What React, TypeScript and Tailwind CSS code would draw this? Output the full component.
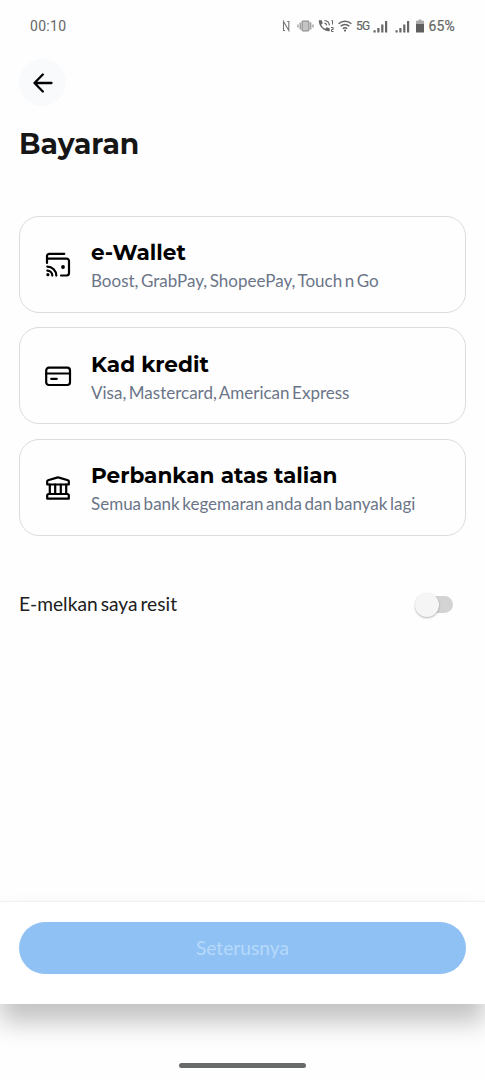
import type { ReactNode } from 'react'

function NfcIcon() {
  return (
    <svg width="9" height="12" viewBox="0 0 9 12" fill="none" stroke="#777" strokeWidth="1.100">
      <path d="M3.200 10.500H1.500V1.500L6.800 10.500V1.500H5.200" />
    </svg>
  )
}

function VibrateIcon() {
  return (
    <svg width="17" height="12" viewBox="0 0 17 12" fill="none" stroke="#888" strokeWidth="1.1">
      <rect x="5" y="1" width="7" height="10" rx="1.2" fill="#c4c4c4" />
      <path d="M3.2 2.500v7M13.800 2.500v7M1 4.500v3M16 4.500v3" />
    </svg>
  )
}

function CallIcon() {
  return (
    <svg width="17" height="14" viewBox="0 0 17 14" fill="none" stroke="#666" strokeWidth="1.200">
      <path d="M.8 1.300h3l.9 3L3.200 5.700c.9 2 2 3.100 4 4l1.500-1.400 3 .9v3C6 12.900.4 7.300.8 1.300Z" fill="#666" stroke="none" />
      <path d="M6.500 4.200c1.200.2 2 1 2.200 2.200M6.500 1.500c2.700.2 4.700 2.200 4.900 4.900" />
      <path d="M13.500 1.500h1v4M13 8.500h2.200v2H13.500v2h2" strokeWidth="1" />
    </svg>
  )
}

function WifiIcon() {
  return (
    <svg width="14" height="12" viewBox="0 0 14 12" fill="none" stroke="#666" strokeWidth="1.500">
      <path d="M.6 3.800c3.600-3.500 9.200-3.500 12.800 0M2.700 6.300c2.400-2.300 6.200-2.300 8.600 0M4.800 8.700c1.300-1.200 3.100-1.200 4.400 0" />
      <circle cx="7" cy="10.600" r="1.100" fill="#666" stroke="none" />
    </svg>
  )
}

function SignalIcon() {
  return (
    <svg width="15" height="13" viewBox="0 0 15 13" fill="#666">
      <path d="M.5 10.200h2.200v2.300H.5zM4.300 8h2.200v4.500H4.300zM8.200 4.500h2.200v8H8.200zM12 1h2.200v11.500H12z" />
    </svg>
  )
}

function BatteryIcon() {
  return (
    <svg width="8" height="14" viewBox="0 0 8 14">
      <path d="M2.500.5h3v1.300H8V5H0V1.800h2.500z" fill="#aaa" />
      <path d="M0 5h8v8.500H0z" fill="#5f5f5f" />
    </svg>
  )
}

function WalletIcon() {
  return (
    <svg width="28" height="28" viewBox="0 0 28 28" fill="none" stroke="#000" strokeWidth="2.200" strokeLinecap="round" strokeLinejoin="round">
      <path d="M20.300 2.800H5.300a2.300 2.300 0 0 0-2.300 2.300V12M3 7.600H22.500a2.500 2.500 0 0 1 2.500 2.500v11.900a2.500 2.500 0 0 1-2.500 2.500h-5.500" />
      <path d="M3.300 15.600c5 0 9 4 9 9M3.300 19.600c2.800 0 5 2.200 5 5" />
      <circle cx="3.900" cy="23.700" r="1.600" fill="#000" stroke="none" />
      <circle cx="19" cy="16" r="1.900" fill="#000" stroke="none" />
    </svg>
  )
}

function CardIcon() {
  return (
    <svg width="28" height="28" viewBox="0 0 28 28" fill="none" stroke="#000" strokeWidth="2.200" strokeLinecap="round">
      <rect x="2.200" y="5.700" width="23.800" height="17.300" rx="2.700" />
      <path d="M2.200 11.500h23.800M7.200 16.800h5.600" />
    </svg>
  )
}

function BankIcon() {
  return (
    <svg width="28" height="28" viewBox="0 0 28 28" fill="none" stroke="#000" strokeWidth="2.200" strokeLinecap="round" strokeLinejoin="round">
      <path d="M3.200 7.300Q3.200 6.400 4 6.200L13 3.600q1-.3 2 0L24 6.200q.8.200.8 1.100v3.200H3.200z" />
      <path d="M5.800 10.500v9M11.200 10.500v9M16.800 10.500v9M22.200 10.500v9" />
      <path d="M4.700 20h18.600q1.500 0 1.500 1.500v3.200H3.200v-3.200q0-1.500 1.500-1.500z" />
    </svg>
  )
}

type Method = { title: string; detail: string; icon: ReactNode }

const methods: Method[] = [
  {
    title: 'e-Wallet',
    detail: 'Boost, GrabPay, ShopeePay, Touch n Go',
    icon: <WalletIcon />,
  },
  {
    title: 'Kad kredit',
    detail: 'Visa, Mastercard, American Express',
    icon: <CardIcon />,
  },
  {
    title: 'Perbankan atas talian',
    detail: 'Semua bank kegemaran anda dan banyak lagi',
    icon: <BankIcon />,
  },
]

function StatusBar() {
  return (
    <div className="flex h-[52px] items-center pl-[30px] font-[Roboto,sans-serif] text-[14px] text-[#666]">
      <span className="tracking-[0.3px]">00:10</span>
      <div className="ml-auto flex items-center pr-[30px]">
        <NfcIcon />
        <span className="ml-[6px]"><VibrateIcon /></span>
        <span className="ml-[4px]"><CallIcon /></span>
        <span className="ml-[3px]"><WifiIcon /></span>
        <span className="ml-[4px] text-[12px] tracking-[-0.8px] [-webkit-text-stroke:0.2px_#666]">5G</span>
        <span className="ml-[4px]"><SignalIcon /></span>
        <span className="ml-[7px]"><SignalIcon /></span>
        <span className="ml-[6px]"><BatteryIcon /></span>
        <span className="ml-[4px] tracking-[0.2px] [-webkit-text-stroke:0.2px_#666]">65%</span>
      </div>
    </div>
  )
}

function MethodCard({ title, detail, icon }: Method) {
  return (
    <button className="flex h-[97px] w-full items-center rounded-[20px] border border-[#dcdcdc] pl-6 text-left">
      <span className="w-[47px] shrink-0 pt-px">{icon}</span>
      <span className="flex flex-col pt-[5px]">
        <span className="font-[Montserrat,sans-serif] text-[21.600px] leading-[29px] font-bold whitespace-nowrap text-black">
          {title}
        </span>
        <span className="text-[17px] leading-[28px] [word-spacing:-1.800px] whitespace-nowrap text-[#6b7588]">{detail}</span>
      </span>
    </button>
  )
}

export default function App() {
  return (
    <div className="flex h-[1080px] w-[485px] flex-col overflow-hidden bg-[#fefefe] font-[Lato,sans-serif]">
      <StatusBar />

      <main className="flex flex-1 flex-col px-[19px] pt-[7px]">
        <button className="flex size-[47px] items-center justify-center rounded-full bg-[#f8fafc]" aria-label="Kembali">
          <svg width="20" height="20" viewBox="0 0 20 20" fill="none" stroke="#000" strokeWidth="2.300" strokeLinecap="round" strokeLinejoin="round">
            <path d="M18.500 10H1.500M9.800 1.500 1.500 10l8.300 8.500" />
          </svg>
        </button>
        <h1 className="mt-5 font-[Montserrat,sans-serif] text-[28.200px] leading-9 font-bold text-[#161616]">
          Bayaran
        </h1>

        <div className="mt-[53.600px] flex flex-col gap-[14.500px]">
          {methods.map((m) => (
            <MethodCard key={m.title} {...m} />
          ))}
        </div>

        <div className="mt-[55px] flex h-7 items-center justify-between pr-[13px]">
          <span className="text-[19.200px] [word-spacing:-1.900px] text-[#202020]">E-melkan saya resit</span>
          <button role="switch" aria-checked="false" aria-label="E-melkan saya resit" className="flex h-[17px] w-[38px] items-center rounded-full bg-linear-to-r from-transparent from-30% to-[#d3d3d3] to-30%">
            <span className="size-6 shrink-0 rounded-full bg-[#f5f5f5] shadow-[0_1px_2px_rgba(0,0,0,0.3)]" />
          </button>
        </div>
      </main>

      <footer className="h-[103px] border-t border-[#f1f1f1] bg-white px-[19px] pt-5 shadow-[0_18px_24px_0_rgba(0,0,0,0.24)]">
        <button className="h-[52px] w-full rounded-full bg-[#8fc1f4] text-[19.200px] text-[#b6d9fb]">Seterusnya</button>
      </footer>
      <div className="flex h-[76px] shrink-0 justify-center">
        <span className="mt-[59px] h-[5px] w-[127px] rounded-full bg-[#686a69]" />
      </div>
    </div>
  )
}
